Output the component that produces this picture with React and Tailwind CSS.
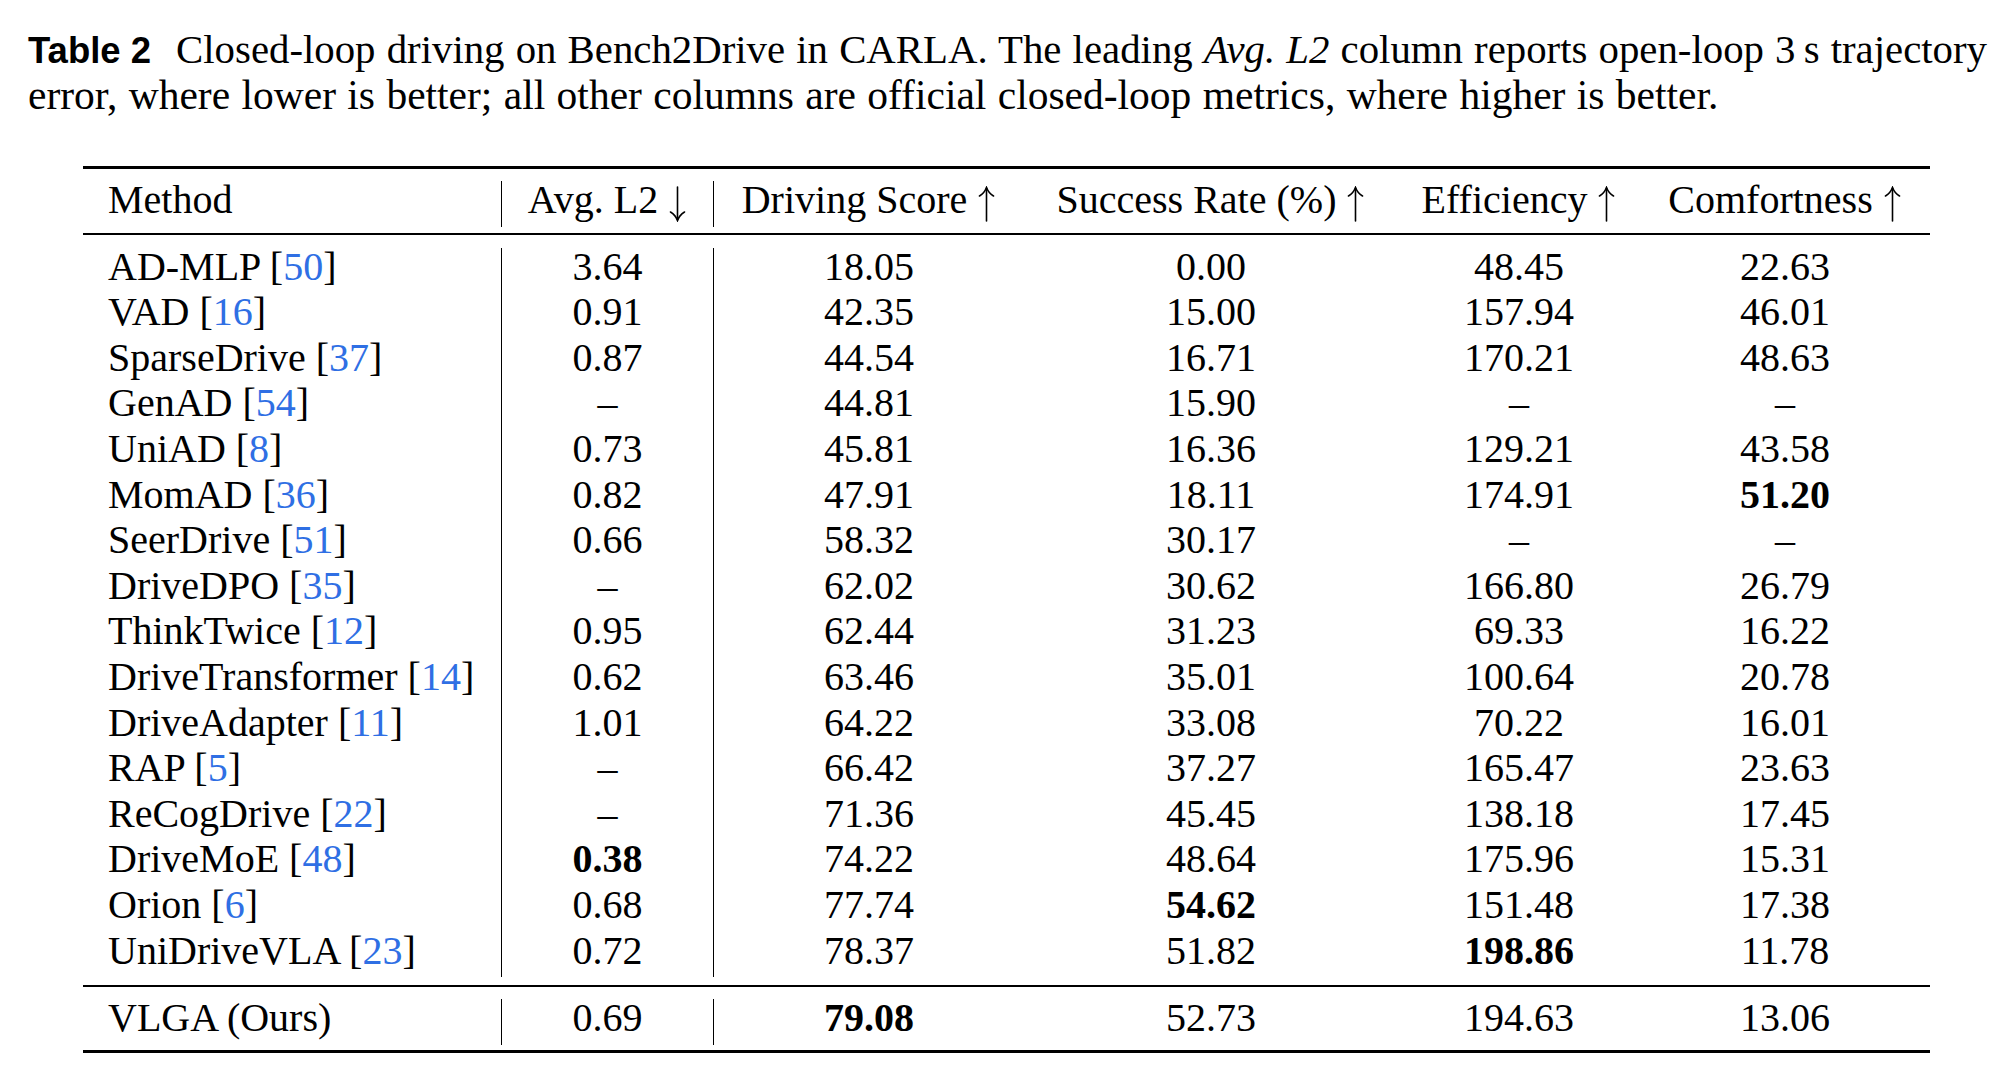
import React from "react";

const rows = [
  { m: "AD-MLP", c: "50", v: ["3.64", "18.05", "0.00", "48.45", "22.63"] },
  { m: "VAD", c: "16", v: ["0.91", "42.35", "15.00", "157.94", "46.01"] },
  { m: "SparseDrive", c: "37", v: ["0.87", "44.54", "16.71", "170.21", "48.63"] },
  { m: "GenAD", c: "54", v: ["–", "44.81", "15.90", "–", "–"] },
  { m: "UniAD", c: "8", v: ["0.73", "45.81", "16.36", "129.21", "43.58"] },
  { m: "MomAD", c: "36", v: ["0.82", "47.91", "18.11", "174.91", "51.20"], b: 4 },
  { m: "SeerDrive", c: "51", v: ["0.66", "58.32", "30.17", "–", "–"] },
  { m: "DriveDPO", c: "35", v: ["–", "62.02", "30.62", "166.80", "26.79"] },
  { m: "ThinkTwice", c: "12", v: ["0.95", "62.44", "31.23", "69.33", "16.22"] },
  { m: "DriveTransformer", c: "14", v: ["0.62", "63.46", "35.01", "100.64", "20.78"] },
  { m: "DriveAdapter", c: "11", v: ["1.01", "64.22", "33.08", "70.22", "16.01"] },
  { m: "RAP", c: "5", v: ["–", "66.42", "37.27", "165.47", "23.63"] },
  { m: "ReCogDrive", c: "22", v: ["–", "71.36", "45.45", "138.18", "17.45"] },
  { m: "DriveMoE", c: "48", v: ["0.38", "74.22", "48.64", "175.96", "15.31"], b: 0 },
  { m: "Orion", c: "6", v: ["0.68", "77.74", "54.62", "151.48", "17.38"], b: 2 },
  { m: "UniDriveVLA", c: "23", v: ["0.72", "78.37", "51.82", "198.86", "11.78"], b: 3 },
];

const cols = "grid grid-cols-[419px_212px_310px_374px_242px_290px] h-[45.6px] leading-[37px]";
const sep = "border-r-[1.5px] border-black";

const Row = ({ method, values, bold }) => (
  <div className={cols}>
    <div className={`pl-[25px] text-left ${sep}`}>{method}</div>
    {values.map((val, i) => (
      <div key={i} className={`text-center ${i === 0 ? sep : ""} ${bold === i ? "font-bold" : ""}`}>
        {val}
      </div>
    ))}
  </div>
);

const Cite = ({ n }) => (
  <>
    {" "}[<span className="text-[#2f6fe4]">{n}</span>]
  </>
);

// thin math-style arrow
const Arrow = ({ up }) => (
  <svg width="19" height="36" viewBox="0 0 19 36" className="inline-block align-[-9px]" fill="none" stroke="black" strokeWidth="1.6" strokeLinecap="round">
    {up ? (
      <>
        <path d="M9.5 2 V35" />
        <path d="M2.5 10 Q7.5 7 9.5 1.5 Q11.5 7 16.5 10" />
      </>
    ) : (
      <>
        <path d="M9.5 1 V34" />
        <path d="M2.5 26 Q7.5 29 9.5 34.5 Q11.5 29 16.5 26" />
      </>
    )}
  </svg>
);

const head = (label, up) => (
  <>
    {label} <Arrow up={up} />
  </>
);

export default function App() {
  return (
    <div className="w-[2013px] h-[1079px] bg-white text-black overflow-hidden font-['Liberation_Serif',serif] text-[40px]">
      <div className="pt-[27px] pl-[28px] w-[1987px] leading-[45px] text-[41.5px]">
        <div className="text-justify [text-align-last:justify] whitespace-nowrap text-[40.8px]">
          <span className="inline-block font-['Liberation_Sans',sans-serif] font-bold text-[36.5px] mr-[25px]">Table 2</span>
          Closed-loop driving on Bench2Drive in CARLA. The leading <i>Avg. L2</i> column reports open-loop 3&#8201;s trajectory
        </div>
        <div className="[word-spacing:1px]">error, where lower is better; all other columns are official closed-loop metrics, where higher is better.</div>
      </div>

      <div className="ml-[83px] w-[1847px] mt-[48px]">
        <div className="border-t-[3px] border-black" />
        <div className="pt-[12px] pb-[6px]">
          <Row
            method="Method"
            values={[
              head("Avg. L2", false),
              head("Driving Score", true),
              head("Success Rate (%)", true),
              head("Efficiency", true),
              head("Comfortness", true),
            ]}
          />
        </div>
        <div className="border-t-[2px] border-black" />
        <div className="pt-[13px] pb-[8px]">
          {rows.map((r) => (
            <Row key={r.m} method={<>{r.m}<Cite n={r.c} /></>} values={r.v} bold={r.b} />
          ))}
        </div>
        <div className="border-t-[2px] border-black" />
        <div className="pt-[12px] pb-[5px]">
          <Row method="VLGA (Ours)" values={["0.69", "79.08", "52.73", "194.63", "13.06"]} bold={1} />
        </div>
        <div className="border-t-[3px] border-black" />
      </div>
    </div>
  );
}
